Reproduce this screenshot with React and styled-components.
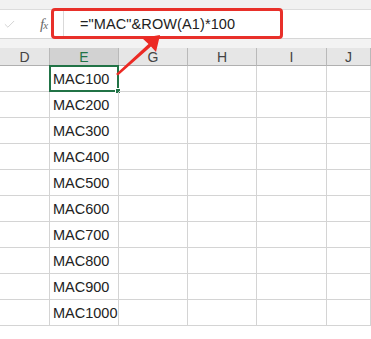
import styled, { createGlobalStyle } from "styled-components";
import { Check } from "lucide-react";

const GlobalStyle = createGlobalStyle`
    html, body {
        margin: 0;
        padding: 0;
        background: #ffffff;
        font-family: "Liberation Sans", Arial, sans-serif;
    }
`;

const Sheet = styled.div`
    position: relative;
    width: 371px;
    height: 339px;
    overflow: hidden;
    background: #ffffff;
`;

const TopStrip = styled.div`
    height: 9px;
    background: #f1f1f1;
    border-bottom: 1px solid #dcdcdc;
`;

const FormulaBar = styled.div`
    display: flex;
    align-items: center;
    height: 28px;
    background: #ffffff;
    border-bottom: 1px solid #d6d6d6;
`;

const NameArea = styled.div`
    display: flex;
    align-items: center;
    width: 64px;
    height: 100%;
    padding-left: 3px;
    box-sizing: border-box;
    color: #c9c9c9;
    border-right: 1px solid #d9d9d9;
`;

const Fx = styled.span`
    margin-left: 24px;
    font-family: "Liberation Serif", serif;
    font-style: italic;
    font-size: 15px;
    color: #6a6a6a;
    letter-spacing: -1px;
    small {
        font-size: 11px;
    }
`;

const FormulaText = styled.div`
    padding-left: 16px;
    font-size: 14.5px;
    color: #222222;
    letter-spacing: 0.1px;
`;

const Gap = styled.div`
    height: 9px;
    background: #f3f3f3;
`;

const Grid = styled.div`
    display: grid;
    grid-template-columns: 50px 69px 69px 69px 70px 1fr;
`;

const Header = styled.div`
    height: 18px;
    box-sizing: border-box;
    display: flex;
    align-items: center;
    justify-content: center;
    background: ${(p) => (p.$active ? "#d2d2d2" : "#e6e6e6")};
    color: ${(p) => (p.$active ? "#217346" : "#444444")};
    border-right: 1px solid #b9b9b9;
    border-bottom: 1px solid #b0b0b0;
    font-size: 14px;
    padding-top: 1px;
`;

const Cell = styled.div`
    position: relative;
    height: 26px;
    box-sizing: border-box;
    display: flex;
    align-items: center;
    padding-left: 3px;
    border-right: 1px solid #d4d4d4;
    border-bottom: 1px solid #d4d4d4;
    font-size: 14.5px;
    color: #222222;
`;

const Selection = styled.div`
    position: absolute;
    left: -1px;
    top: -1px;
    right: -1px;
    bottom: -1px;
    border: 2px solid #217346;
    pointer-events: none;
`;

const FillHandle = styled.div`
    position: absolute;
    right: -4px;
    bottom: -4px;
    width: 6px;
    height: 6px;
    background: #217346;
    border: 1px solid #ffffff;
    box-sizing: border-box;
`;

const Callout = styled.div`
    position: absolute;
    left: 51px;
    top: 8px;
    width: 232px;
    height: 31px;
    box-sizing: border-box;
    border: 3px solid #e8302a;
    border-radius: 4px;
`;

const Arrow = styled.svg`
    position: absolute;
    left: 0;
    top: 0;
    pointer-events: none;
`;

const columns = ["D", "E", "G", "H", "I", "J"];
const values = [100, 200, 300, 400, 500, 600, 700, 800, 900, 1000];

export default function App() {
    return (
        <>
            <GlobalStyle />
            <Sheet>
                <TopStrip />
                <FormulaBar>
                    <NameArea>
                        <Check size={13} strokeWidth={1.5} />
                        <Fx>
                            f<small>x</small>
                        </Fx>
                    </NameArea>
                    <FormulaText>="MAC"&amp;ROW(A1)*100</FormulaText>
                </FormulaBar>
                <Gap />
                <Grid>
                    {columns.map((c) => (
                        <Header key={c} $active={c === "E"}>
                            {c}
                        </Header>
                    ))}
                    {values.map((v, i) =>
                        columns.map((c) => (
                            <Cell key={c + i}>
                                {c === "E" ? "MAC" + v : ""}
                                {c === "E" && i === 0 && (
                                    <Selection>
                                        <FillHandle />
                                    </Selection>
                                )}
                            </Cell>
                        ))
                    )}
                </Grid>
                <Callout />
                <Arrow width="371" height="339">
                    <polygon
                        points="116,74 148.5,44 142,38 160,35 156,52 151,46.5 118,75.5"
                        fill="#ec2a24"
                    />
                </Arrow>
            </Sheet>
        </>
    );
}
